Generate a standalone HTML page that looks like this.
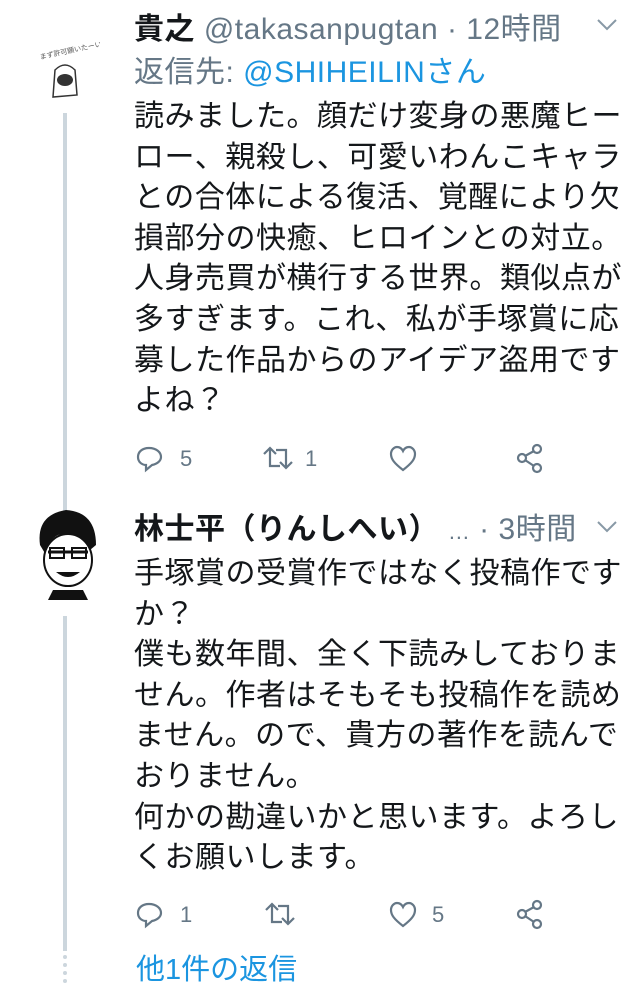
<!DOCTYPE html>
<html><head><meta charset="utf-8"><style>
body{margin:0;width:644px;height:999px;background:#fff;position:relative;overflow:hidden;font-family:"Liberation Sans","Noto Sans CJK JP",sans-serif;color:#14171a}
.a{position:absolute;white-space:nowrap}
.t{font-size:30px;line-height:44px;letter-spacing:0.5px;left:134px}
.bd{line-height:40.6px}
.g{color:#657786}
.b{color:#1b95e0}
.n{font-weight:bold}
.vl{position:absolute;left:63px;width:4px;background:#ccd6dd}
svg{position:absolute}
.c{font-size:22px;color:#657786}
</style></head><body>
<div class="a t" style="top:8px"><span class="n">貴之</span> <span class="g">@takasanpugtan · 12時間</span></div>
<svg style="left:596px;top:18px" width="22" height="14"><path d="M2 2 L11 11 L20 2" fill="none" stroke="#8899a6" stroke-width="2"/></svg>
<div class="a t" style="top:51px"><span class="g">返信先: </span><span class="b">@SHIHEILINさん</span></div>
<div class="a t bd" style="top:97px">読みました。顔だけ変身の悪魔ヒー<br>ロー、親殺し、可愛いわんこキャラ<br>との合体による復活、覚醒により欠<br>損部分の快癒、ヒロインとの対立。<br>人身売買が横行する世界。類似点が<br>多すぎます。これ、私が手塚賞に応<br>募した作品からのアイデア盗用です<br>よね？</div>
<svg style="left:35px;top:40px" width="65" height="60"><text x="4" y="14" font-size="7" fill="#555" font-family="Liberation Sans,Noto Sans CJK JP" transform="rotate(-12 30 10)">まず許可願いたーい!</text><path d="M20 30 Q30 20 40 30 L42 55 L18 57 Z" fill="#fff" stroke="#333" stroke-width="1.5"/><ellipse cx="30" cy="40" rx="8" ry="6" fill="#333"/></svg>
<div class="vl" style="top:113px;height:400px"></div>
<svg style="left:135px;top:444px" width="30" height="30"><path d="M14 4 C7 4 3 8 3 13 C3 18 7 21 11 21 L11 26 L17 21 C22 20 26 17 26 13 C26 8 21 4 14 4Z" fill="none" stroke="#657786" stroke-width="2.2"/></svg>
<div class="a c" style="left:180px;top:446px">5</div>
<svg style="left:260px;top:444px" width="36" height="30"><path d="M4 10 L10 4 L16 10 M10 4 V22 H20 M32 18 L26 24 L20 18 M26 24 V6 H16" fill="none" stroke="#657786" stroke-width="2.2"/></svg>
<div class="a c" style="left:305px;top:446px">1</div>
<svg style="left:388px;top:444px" width="30" height="30"><path d="M15 26 C6 19 3 15 3 10 C3 6 6 3 9 3 C12 3 14 5 15 7 C16 5 18 3 21 3 C24 3 27 6 27 10 C27 15 24 19 15 26Z" fill="none" stroke="#657786" stroke-width="2.2"/></svg>
<svg style="left:515px;top:443px" width="30" height="32"><circle cx="22" cy="6" r="4" fill="none" stroke="#657786" stroke-width="2.2"/><circle cx="7" cy="15" r="4" fill="none" stroke="#657786" stroke-width="2.2"/><circle cx="22" cy="25" r="4" fill="none" stroke="#657786" stroke-width="2.2"/><path d="M10 13 L19 8 M10 17 L19 23" stroke="#657786" stroke-width="2.2"/></svg>

<div class="a t" style="top:508px"><span class="n">林士平（りんしへい）</span> <span class="g" style="font-size:22px">…</span><span class="g"> · 3時間</span></div>
<svg style="left:596px;top:520px" width="22" height="14"><path d="M2 2 L11 11 L20 2" fill="none" stroke="#8899a6" stroke-width="2"/></svg>
<svg style="left:18px;top:500px" width="95" height="100"><path d="M22 45 Q18 15 48 10 Q78 12 78 45 L72 50 Q60 30 40 35 Q30 40 28 55 Z" fill="#111"/><ellipse cx="50" cy="60" rx="24" ry="26" fill="#fff" stroke="#111" stroke-width="2"/><path d="M30 52 H70" stroke="#111" stroke-width="3"/><rect x="32" y="48" width="14" height="10" fill="none" stroke="#111" stroke-width="2"/><rect x="54" y="48" width="14" height="10" fill="none" stroke="#111" stroke-width="2"/><path d="M38 72 Q50 82 62 72" fill="#111"/><path d="M35 90 L65 90 L70 100 L30 100Z" fill="#111"/></svg>
<div class="a t bd" style="top:554px">手塚賞の受賞作ではなく投稿作です<br>か？<br>僕も数年間、全く下読みしておりま<br>せん。作者はそもそも投稿作を読め<br>ません。ので、貴方の著作を読んで<br>おりません。<br>何かの勘違いかと思います。よろし<br>くお願いします。</div>
<div class="vl" style="top:616px;height:335px"></div>
<div style="position:absolute;left:63px;top:955px;width:4px">
<div style="width:4px;height:4px;border-radius:2px;background:#ccd6dd;margin-bottom:4px"></div><div style="width:4px;height:4px;border-radius:2px;background:#ccd6dd;margin-bottom:4px"></div><div style="width:4px;height:4px;border-radius:2px;background:#ccd6dd;margin-bottom:4px"></div><div style="width:4px;height:4px;border-radius:2px;background:#ccd6dd"></div></div>
<svg style="left:135px;top:900px" width="30" height="30"><path d="M14 4 C7 4 3 8 3 13 C3 18 7 21 11 21 L11 26 L17 21 C22 20 26 17 26 13 C26 8 21 4 14 4Z" fill="none" stroke="#657786" stroke-width="2.2"/></svg>
<div class="a c" style="left:180px;top:902px">1</div>
<svg style="left:262px;top:900px" width="36" height="30"><path d="M4 10 L10 4 L16 10 M10 4 V22 H20 M32 18 L26 24 L20 18 M26 24 V6 H16" fill="none" stroke="#657786" stroke-width="2.2"/></svg>
<svg style="left:388px;top:900px" width="30" height="30"><path d="M15 26 C6 19 3 15 3 10 C3 6 6 3 9 3 C12 3 14 5 15 7 C16 5 18 3 21 3 C24 3 27 6 27 10 C27 15 24 19 15 26Z" fill="none" stroke="#657786" stroke-width="2.2"/></svg>
<div class="a c" style="left:432px;top:902px">5</div>
<svg style="left:515px;top:899px" width="30" height="32"><circle cx="22" cy="6" r="4" fill="none" stroke="#657786" stroke-width="2.2"/><circle cx="7" cy="15" r="4" fill="none" stroke="#657786" stroke-width="2.2"/><circle cx="22" cy="25" r="4" fill="none" stroke="#657786" stroke-width="2.2"/><path d="M10 13 L19 8 M10 17 L19 23" stroke="#657786" stroke-width="2.2"/></svg>
<div class="a" style="left:136px;top:950px;font-size:29px;line-height:40px;color:#1b95e0">他1件の返信</div>
</body></html>
